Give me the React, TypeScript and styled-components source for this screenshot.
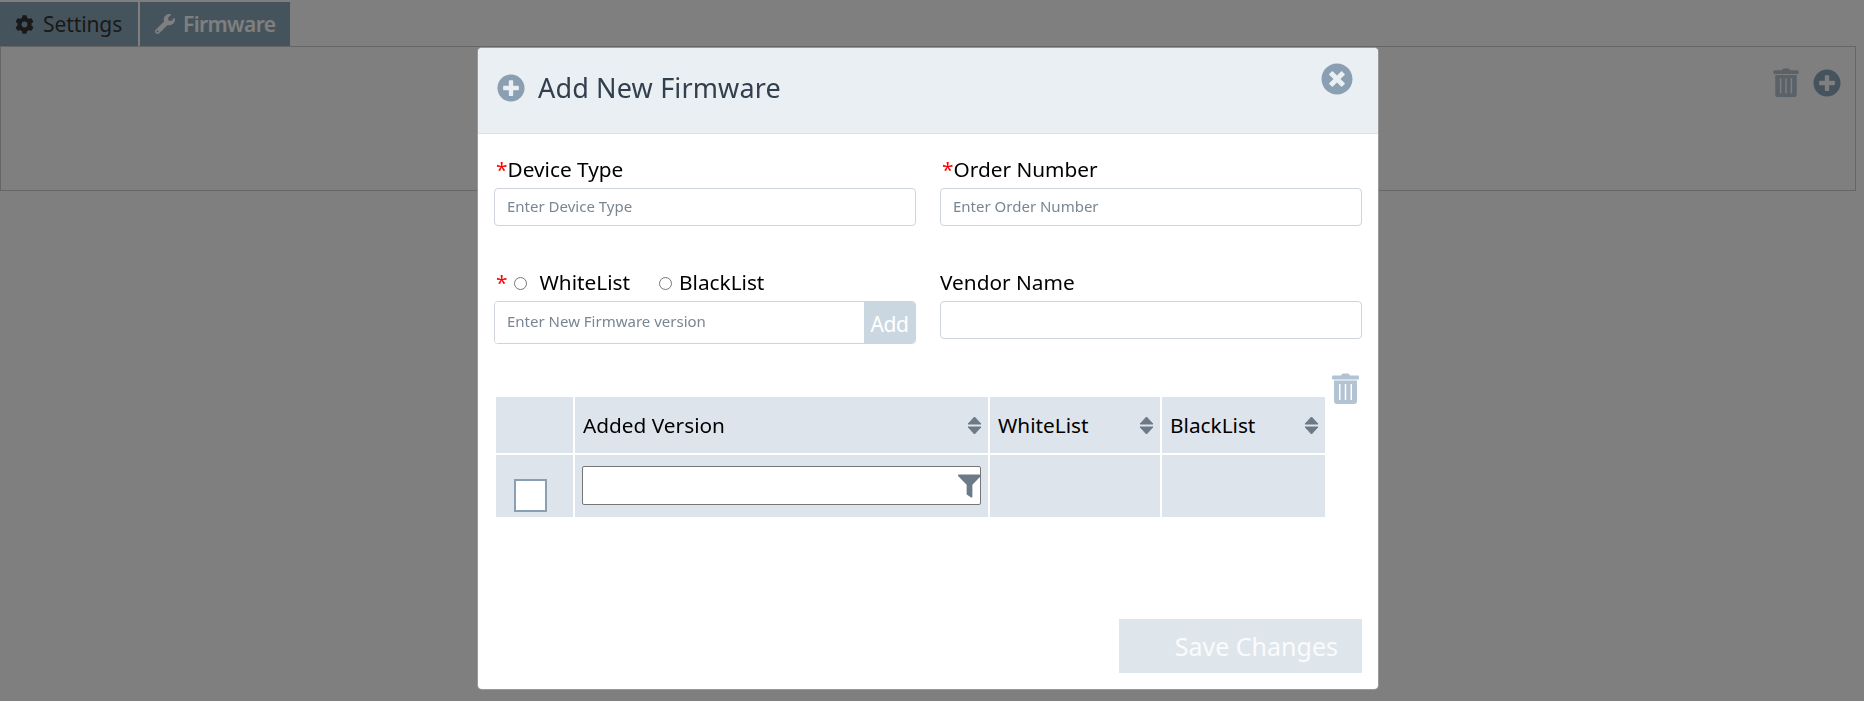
import React from "react";
import styled, { createGlobalStyle } from "styled-components";
import { FaCog, FaWrench, FaPlusCircle, FaTimesCircle, FaFilter } from "react-icons/fa";

const FONT = `"Noto Sans", "Open Sans", "Liberation Sans", sans-serif`;

const Global = createGlobalStyle`
  html, body { margin: 0; padding: 0; background: #fff; font-family: ${FONT}; overflow: hidden; }
  * { box-sizing: border-box; }
`;

const Page = styled.div`
  height: 701px;
  padding-top: 2px;
`;

const Tabs = styled.nav`
  display: flex;
  gap: 2px;
  height: 44px;
`;

const Tab = styled.div<{ $active?: boolean; $w: number; $gap: number }>`
  display: flex;
  align-items: center;
  gap: ${(p) => p.$gap}px;
  width: ${(p) => p.$w}px;
  padding-left: 15px;
  background: #8ba8b9;
  color: ${(p) => (p.$active ? "#fff" : "#333")};
  font-size: 21px;
  font-weight: ${(p) => (p.$active ? 600 : 400)};
  letter-spacing: ${(p) => (p.$active ? -0.6 : -0.1)}px;
`;

const Panel = styled.section`
  display: flex;
  justify-content: flex-end;
  align-items: flex-start;
  gap: 14px;
  width: 1856px;
  height: 145px;
  padding: 21px 14px 0 0;
  border: 1px solid #ccc;
`;

const PanelTrash = styled.svg`
  width: 26px;
  height: 29px;
  fill: #b5c5d1;
`;

const PanelPlus = styled(FaPlusCircle)`
  width: 28px;
  height: 28px;
  margin-top: 1px;
  color: #8ba8b9;
`;

const Overlay = styled.div`
  position: fixed;
  inset: 0;
  background: rgba(0, 0, 0, 0.5);
`;

const Modal = styled.div`
  position: absolute;
  left: 477px;
  top: 47px;
  display: flex;
  flex-direction: column;
  width: 902px;
  height: 643px;
  background: #fff;
  border: 1px solid rgba(0, 0, 0, 0.4);
  border-radius: 5px;
  overflow: hidden;
`;

const Header = styled.header`
  display: flex;
  align-items: flex-start;
  height: 86px;
  padding: 26px 25px 0 19px;
  background: #eaeff3;
  border-bottom: 1px solid #dee2e6;
  flex: none;
`;

const HeaderPlus = styled(FaPlusCircle)`
  width: 28px;
  height: 28px;
  color: #8a9fb1;
  flex: none;
`;

const Title = styled.h5`
  flex: 1;
  margin: 0 0 0 13px;
  font-size: 27px;
  line-height: 28px;
  font-weight: 400;
  letter-spacing: 0.15px;
  color: #323f4d;
`;

const Close = styled(FaTimesCircle)`
  width: 32px;
  height: 32px;
  margin-top: -11px;
  color: #8a9fb1;
  flex: none;
`;

const Form = styled.div`
  display: grid;
  grid-template-columns: 422px 422px;
  column-gap: 24px;
  padding: 21px 16px 0;
`;

const Field = styled.div<{ $top?: number }>`
  margin-top: ${(p) => p.$top ?? 0}px;
`;

const Label = styled.label`
  display: flex;
  align-items: center;
  height: 28px;
  margin-bottom: 5px;
  padding-left: 2px;
  font-size: 20.8px;
  color: #000;
`;

const VendorLabel = styled(Label)`
  padding-left: 0;
`;

const Star = styled.span`
  color: #f00;
`;

const TextInput = styled.input`
  display: block;
  width: 100%;
  height: 38px;
  padding: 0 12px 2px;
  border: 1px solid #ced4da;
  border-radius: 4px;
  background: #fff;
  font-family: ${FONT};
  font-size: 15px;
  outline: none;
  &::placeholder { color: #7a8691; opacity: 1; }
`;

const Radio = styled.input.attrs({ type: "radio" })`
  appearance: none;
  width: 13px;
  height: 13px;
  margin: 3px 0 0;
  border: 1px solid #767676;
  border-radius: 50%;
  background: #fff;
  flex: none;
`;

const RadioText = styled.span<{ $gap: number; $after: number }>`
  margin-left: ${(p) => p.$gap}px;
  margin-right: ${(p) => p.$after}px;
`;

const StarGap = styled(Star)`
  margin-right: 7px;
`;

const InputGroup = styled.div`
  display: flex;
  height: 43px;
  border: 1px solid #ced4da;
  border-radius: 4px;
  overflow: hidden;
`;

const GroupInput = styled(TextInput)`
  flex: 1;
  width: auto;
  height: 100%;
  border: 0;
  border-radius: 0;
  padding-bottom: 4px;
`;

const AddButton = styled.button`
  width: 51px;
  padding: 2px 0 0;
  border: 0;
  background: #cbd7e0;
  color: #fff;
  font-family: ${FONT};
  font-size: 21px;
  letter-spacing: -0.4px;
`;

const TableRow = styled.div`
  display: flex;
  align-items: flex-start;
  margin-top: 29px;
  padding-left: 18px;
`;

const Grid = styled.div`
  display: grid;
  grid-template-columns: 77px 413px 170px 163px;
  grid-template-rows: 56px 62px;
  gap: 2px;
  margin-top: 24px;
`;

const Cell = styled.div`
  background: #dee4ec;
`;

const HeadCell = styled(Cell)`
  display: flex;
  align-items: center;
  justify-content: space-between;
  padding: 0 6px 0 8px;
  font-size: 20.8px;
  color: #000;
`;

const SortIcon = styled.svg`
  width: 15px;
  height: 19px;
  fill: #6c7a87;
  stroke: #6c7a87;
  stroke-width: 1;
  stroke-linejoin: round;
  flex: none;
`;

const CheckCell = styled(Cell)`
  display: flex;
  padding: 24px 0 0 18px;
`;

const Check = styled.input.attrs({ type: "checkbox" })`
  appearance: none;
  width: 33px;
  height: 33px;
  margin: 0;
  border: 2px solid #8a9fb1;
  background: #fff;
`;

const FilterCell = styled(Cell)`
  padding: 11px 7px 0;
`;

const FilterWrap = styled.div`
  position: relative;
  width: 399px;
`;

const FilterInput = styled.input`
  display: block;
  width: 100%;
  height: 39px;
  border: 1px solid #767676;
  border-radius: 2px;
  background: #fff;
  outline: none;
`;

const FilterIcon = styled(FaFilter)`
  position: absolute;
  right: 0;
  top: 8px;
  width: 23px;
  height: 24px;
  color: #6c7a87;
`;

const SideTrash = styled.svg`
  width: 27px;
  height: 31px;
  margin-left: 7px;
  fill: #b2c4d3;
`;

const Footer = styled.footer`
  display: flex;
  justify-content: flex-end;
  margin-top: auto;
  padding: 0 16px 16px;
`;

const Save = styled.button`
  width: 243px;
  height: 54px;
  padding: 0 24px 0 0;
  border: 0;
  background: #dfe6eb;
  color: #fafbfc;
  font-family: ${FONT};
  font-size: 25px;
  text-align: right;
`;

const TrashGlyph = () => (
  <>
    <path d="M9 2.5C9.5 1 10.5.5 12 .5h3c1.5 0 2.5.5 3 2h8a1 1 0 0 1 1 1v2a1 1 0 0 1-1 1H1a1 1 0 0 1-1-1v-2a1 1 0 0 1 1-1z" />
    <path
      fillRule="evenodd"
      d="M2 7.5h23V28a3 3 0 0 1-3 3H5a3 3 0 0 1-3-3zM7 11v16h1.5V11zM12.75 11v16h1.5V11zM18.5 11v16H20V11z"
    />
  </>
);

const Sort = () => (
  <SortIcon viewBox="0 0 15 19">
    <path d="M7.5 1 14 8H1z" />
    <path d="M1 11h13l-6.5 7z" />
  </SortIcon>
);

const columns = ["Added Version", "WhiteList", "BlackList"];

export default function App() {
  return (
    <>
      <Global />
      <Page>
        <Tabs>
          <Tab $w={138} $gap={9}>
            <FaCog size={19} />
            Settings
          </Tab>
          <Tab $w={150} $gap={8} $active>
            <FaWrench size={20} />
            Firmware
          </Tab>
        </Tabs>
        <Panel>
          <PanelTrash viewBox="0 0 27 31">
            <TrashGlyph />
          </PanelTrash>
          <PanelPlus />
        </Panel>
      </Page>
      <Overlay>
        <Modal>
          <Header>
            <HeaderPlus />
            <Title>Add New Firmware</Title>
            <Close />
          </Header>
          <Form>
            <Field>
              <Label>
                <Star>*</Star>Device Type
              </Label>
              <TextInput placeholder="Enter Device Type" />
            </Field>
            <Field>
              <Label>
                <Star>*</Star>Order Number
              </Label>
              <TextInput placeholder="Enter Order Number" />
            </Field>
            <Field $top={42}>
              <Label>
                <StarGap>*</StarGap>
                <Radio name="list" />
                <RadioText $gap={12} $after={29}>WhiteList</RadioText>
                <Radio name="list" />
                <RadioText $gap={7} $after={0}>BlackList</RadioText>
              </Label>
              <InputGroup>
                <GroupInput placeholder="Enter New Firmware version" />
                <AddButton>Add</AddButton>
              </InputGroup>
            </Field>
            <Field $top={42}>
              <VendorLabel>Vendor Name</VendorLabel>
              <TextInput />
            </Field>
          </Form>
          <TableRow>
            <Grid>
              <Cell />
              {columns.map((c) => (
                <HeadCell key={c}>
                  {c}
                  <Sort />
                </HeadCell>
              ))}
              <CheckCell>
                <Check />
              </CheckCell>
              <FilterCell>
                <FilterWrap>
                  <FilterInput />
                  <FilterIcon />
                </FilterWrap>
              </FilterCell>
              <Cell />
              <Cell />
            </Grid>
            <SideTrash viewBox="0 0 27 31">
              <TrashGlyph />
            </SideTrash>
          </TableRow>
          <Footer>
            <Save>Save Changes</Save>
          </Footer>
        </Modal>
      </Overlay>
    </>
  );
}
